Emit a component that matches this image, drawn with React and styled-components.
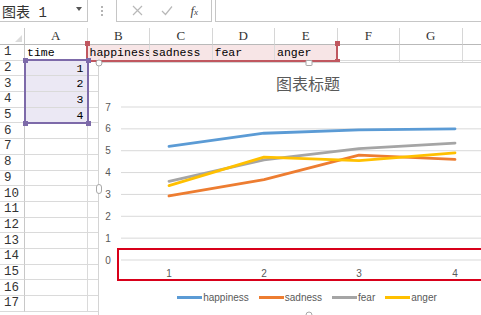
import React from 'react';
import styled, { createGlobalStyle } from 'styled-components';

const Global = createGlobalStyle`
  html, body { margin: 0; padding: 0; background: #fff; overflow: hidden; }
  body { width: 481px; height: 315px; font-family: "Liberation Sans", sans-serif; }
`;

const Page = styled.div`
  position: relative;
  width: 481px;
  height: 315px;
  overflow: hidden;
  background: #fff;
`;

/* ---------- formula bar ---------- */
const FormulaBar = styled.div`
  display: flex;
  align-items: stretch;
  height: 22px;
`;

const NameBox = styled.div`
  width: 88px;
  box-sizing: border-box;
  border-right: 1px solid #c6c6c6;
  border-bottom: 1px solid #c6c6c6;
  display: flex;
  align-items: center;
  justify-content: space-between;
  padding: 0 5px 0 2px;
  font-family: "Liberation Mono", "Noto Sans CJK SC", monospace;
  font-size: 14px;
  color: #333;
`;

const Caret = styled.span`
  width: 0;
  height: 0;
  border-left: 3px solid transparent;
  border-right: 3px solid transparent;
  border-top: 4px solid #555;
  margin-bottom: 4px;
`;

const Grip = styled.div`
  width: 28px;
  display: flex;
  flex-direction: column;
  align-items: center;
  justify-content: center;
  gap: 2px;
  & > span { width: 2px; height: 2px; background: #b4b4b4; }
`;

const ButtonBox = styled.div`
  width: 96px;
  box-sizing: border-box;
  border: 1px solid #c6c6c6;
  border-top: none;
  display: flex;
  align-items: center;
  justify-content: space-around;
  padding: 0 4px 0 6px;
`;

const Fx = styled.span`
  font-family: "Liberation Serif", serif;
  font-style: italic;
  font-size: 13px;
  color: #444;
  & > small { font-size: 9px; }
`;

const FormulaInput = styled.div`
  flex: 1;
  margin-left: 3px;
  border: 1px solid #c6c6c6;
  border-top: none;
  border-right: none;
`;

/* ---------- sheet ---------- */
const Sheet = styled.div`
  margin-top: 6px;
  display: grid;
  grid-template-columns: 25px repeat(8, 62.5px);
  grid-template-rows: 17px repeat(17, 15.7px);
`;

const Corner = styled.div`
  position: relative;
  box-sizing: border-box;
  border-right: 1px solid #c8c8c8;
  border-bottom: 1px solid #b9b9b9;
  &::after {
    content: '';
    position: absolute;
    right: 2px;
    bottom: 2px;
    width: 0;
    height: 0;
    border-left: 7px solid transparent;
    border-bottom: 7px solid #dcdcdc;
  }
`;

const ColHead = styled.div`
  box-sizing: border-box;
  border-right: 1px solid #d6d6d6;
  border-bottom: 1px solid #b9b9b9;
  display: flex;
  align-items: flex-end;
  justify-content: center;
  padding-bottom: 1px;
  font-family: "Liberation Serif", serif;
  font-size: 13px;
  line-height: 14px;
  color: #333;
`;

const RowHead = styled.div`
  box-sizing: border-box;
  border-right: 1px solid #c8c8c8;
  border-bottom: 1px solid #dadada;
  display: flex;
  align-items: center;
  padding-left: 4px;
  font-family: "Liberation Mono", monospace;
  font-size: 12.5px;
  color: #333;
`;

const Cell = styled.div`
  box-sizing: border-box;
  border-right: 1px solid #dadada;
  border-bottom: 1px solid #dadada;
  background: ${p => p.$fill || '#fff'};
  display: flex;
  align-items: center;
  justify-content: ${p => (p.$right ? 'flex-end' : 'flex-start')};
  padding: 0 ${p => (p.$right ? '3px' : '0')} 0 2px;
  overflow: hidden;
  white-space: nowrap;
  font-family: "Liberation Mono", monospace;
  font-size: 11.5px;
  color: #000;
`;

/* ---------- selection overlays ---------- */
const RangeBox = styled.div`
  position: absolute;
  box-sizing: border-box;
  left: ${p => p.$x}px;
  top: ${p => p.$y}px;
  width: ${p => p.$w}px;
  height: ${p => p.$h}px;
  border: 2px solid ${p => p.$color};
  ${p => (p.$noTop ? 'border-top: none;' : '')}
  pointer-events: none;
`;

const Knob = styled.span`
  position: absolute;
  width: 5px;
  height: 5px;
  background: ${p => p.$color};
  ${p => (p.$right ? 'right: -3.5px;' : 'left: -3.5px;')}
  ${p => (p.$bottom ? 'bottom: -3.5px;' : 'top: -3.5px;')}
`;

/* ---------- chart ---------- */
const Chart = styled.div`
  position: absolute;
  left: 98px;
  top: 62px;
  width: 420px;
  height: 270px;
  box-sizing: border-box;
  border: 1px solid #d4d4d4;
  border-radius: 2px;
  background: #fff;
  display: flex;
  flex-direction: column;
`;

const Title = styled.div`
  padding-top: 10px;
  height: 21px;
  line-height: 20px;
  text-align: center;
  font-family: "Noto Sans CJK SC", sans-serif;
  font-size: 16px;
  color: #595959;
`;

const Legend = styled.div`
  height: 20px;
  display: flex;
  align-items: center;
  justify-content: center;
  gap: 10px;
  padding-right: 2px;
`;

const LegendItem = styled.div`
  display: flex;
  align-items: center;
  gap: 1px;
  font-family: "Liberation Sans", sans-serif;
  font-size: 10px;
  color: #595959;
`;

const Swatch = styled.span`
  width: 25px;
  height: 3px;
  background: ${p => p.$color};
`;

const Handle = styled.span`
  position: absolute;
  box-sizing: border-box;
  width: ${p => p.$w || 7}px;
  height: ${p => p.$h || 7}px;
  border: 1px solid #a8a8a8;
  border-radius: ${p => p.$r || '50%'};
  background: #fff;
  left: ${p => p.$x}px;
  top: ${p => p.$y}px;
  transform: translate(-50%, -50%);
`;

const Highlight = styled.div`
  position: absolute;
  left: 117px;
  top: 248px;
  width: 400px;
  height: 33px;
  box-sizing: border-box;
  border: 2px solid #d8001a;
  pointer-events: none;
`;

const series = [
  { name: 'happiness', color: '#5b9bd5', values: [5.2, 5.8, 5.95, 6.0] },
  { name: 'sadness', color: '#ed7d31', values: [2.93, 3.68, 4.8, 4.6] },
  { name: 'fear', color: '#a5a5a5', values: [3.6, 4.58, 5.1, 5.35] },
  { name: 'anger', color: '#ffc000', values: [3.4, 4.71, 4.55, 4.9] },
];

const xs = [70, 165, 260, 356];
const yOf = v => 166 - v * 21.857;

function Plot() {
  return (
    <svg width="418" height="193" style={{ display: 'block' }}>
      {[0, 1, 2, 3, 4, 5, 6, 7].map(v => (
        <g key={v}>
          <line x1="22" x2="418" y1={yOf(v)} y2={yOf(v)} stroke="#d9d9d9" strokeWidth="1" />
          <text x="9" y={yOf(v) + 3.5} fontSize="10" fill="#595959" textAnchor="middle" fontFamily="Liberation Sans, sans-serif">{v}</text>
        </g>
      ))}
      {xs.map((x, i) => (
        <text key={i} x={x} y="183" fontSize="10" fill="#595959" textAnchor="middle" fontFamily="Liberation Sans, sans-serif">{i + 1}</text>
      ))}
      {series.map(s => (
        <polyline
          key={s.name}
          points={s.values.map((v, i) => `${xs[i]},${yOf(v)}`).join(' ')}
          fill="none"
          stroke={s.color}
          strokeWidth="2.8"
          strokeLinecap="round"
          strokeLinejoin="round"
        />
      ))}
    </svg>
  );
}

const cols = ['A', 'B', 'C', 'D', 'E', 'F', 'G', ''];
const row1 = ['time', 'happiness', 'sadness', 'fear', 'anger'];

export default function App() {
  const rows = Array.from({ length: 17 }, (_, i) => i + 1);
  return (
    <Page>
      <Global />
      <FormulaBar>
        <NameBox>
          <span>图表 1</span>
          <Caret />
        </NameBox>
        <Grip><span /><span /><span /></Grip>
        <ButtonBox>
          <svg width="11" height="11" viewBox="0 0 11 11">
            <path d="M1 1L10 10M10 1L1 10" stroke="#b8b8b8" strokeWidth="1.2" />
          </svg>
          <svg width="12" height="11" viewBox="0 0 12 11">
            <path d="M1 6L4.5 9.5L11 1.5" stroke="#b8b8b8" strokeWidth="1.2" fill="none" />
          </svg>
          <Fx>f<small>x</small></Fx>
        </ButtonBox>
        <FormulaInput />
      </FormulaBar>

      <Sheet>
        <Corner />
        {cols.map((c, i) => <ColHead key={i}>{c}</ColHead>)}
        {rows.map(r => (
          <React.Fragment key={r}>
            <RowHead>{r}</RowHead>
            {cols.map((c, ci) => {
              if (r === 1) {
                return (
                  <Cell key={ci} $fill={ci >= 1 && ci <= 4 ? '#f7e5e6' : undefined}>
                    {row1[ci] || ''}
                  </Cell>
                );
              }
              if (r >= 2 && r <= 5 && ci === 0) {
                return <Cell key={ci} $right $fill="#ebe8f4">{r - 1}</Cell>;
              }
              return <Cell key={ci} />;
            })}
          </React.Fragment>
        ))}
      </Sheet>

      <RangeBox $x={86} $y={44} $w={252} $h={18} $color="#c0575f" $noTop>
        <Knob $color="#c0575f" />
        <Knob $color="#c0575f" $right />
        <Knob $color="#c0575f" $right $bottom />
      </RangeBox>
      <RangeBox $x={24} $y={59} $w={65} $h={65} $color="#7d6aa9">
        <Knob $color="#7d6aa9" />
        <Knob $color="#7d6aa9" $right />
        <Knob $color="#7d6aa9" $bottom />
        <Knob $color="#7d6aa9" $right $bottom />
      </RangeBox>

      <Chart>
        <Title>图表标题</Title>
        <Plot />
        <Legend>
          {series.map(s => (
            <LegendItem key={s.name}>
              <Swatch $color={s.color} />
              {s.name}
            </LegendItem>
          ))}
        </Legend>
        <Handle $x={0} $y={126} $w={6} $h={10} $r="3px" />
        <Handle $x={0} $y={0} />
        <Handle $x={210} $y={0} $w={7} $h={6} $r="1px" />
        <Handle $x={210} $y={252} />
      </Chart>

      <Highlight />
    </Page>
  );
}
